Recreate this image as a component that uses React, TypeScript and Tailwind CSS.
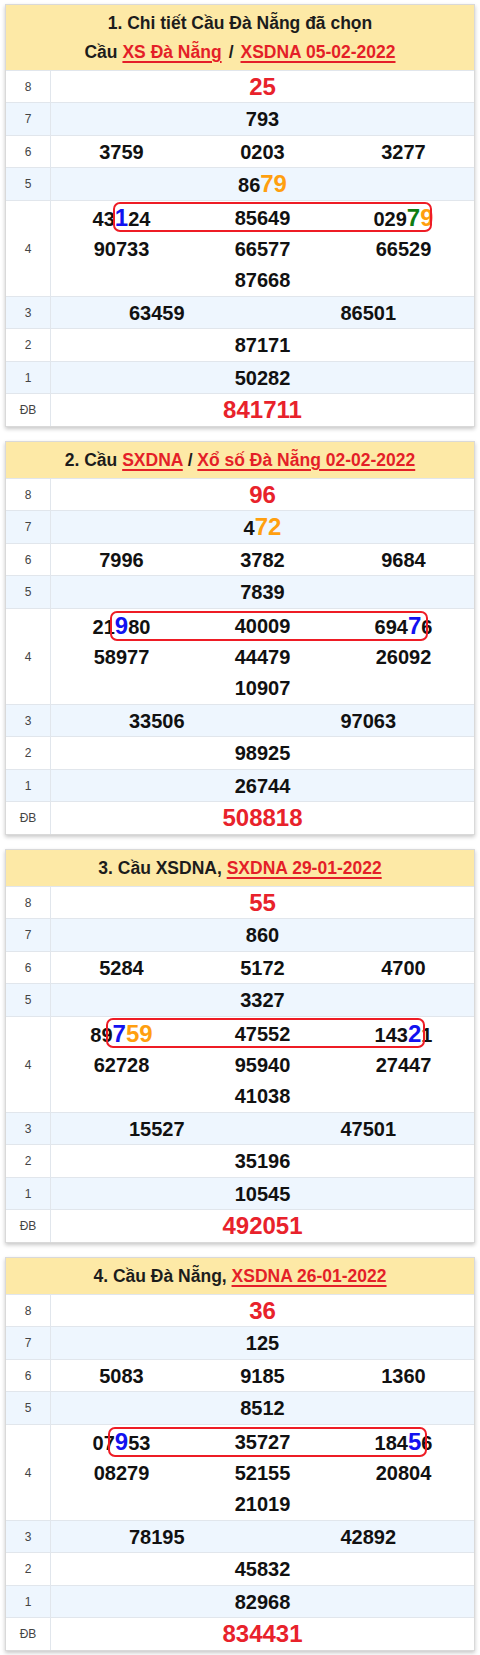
import React from "react";

type Seg = { t: string; c?: "red" | "orange" | "blue" | "green" };
type Item = Seg[];

const s = (t: string, c?: Seg["c"]): Seg => ({ t, c });
const n = (t: string): Item => [s(t)];

const colorCls: Record<string, string> = {
  red: "text-[#e8222b] text-[24px]",
  orange: "text-[#ff9f0f] text-[24px]",
  blue: "text-[#1212f0] text-[24px]",
  green: "text-[#0e7d12] text-[24px]",
};

function Num({ item }: { item: Item }) {
  return (
    <span className="whitespace-nowrap">
      {item.map((seg, i) => (
        <span key={i} className={seg.c ? colorCls[seg.c] : ""}>
          {seg.t}
        </span>
      ))}
    </span>
  );
}

type CardData = {
  header: React.ReactNode;
  twoLine?: boolean;
  g8: string;
  g7: Item;
  g6: Item[];
  g5: Item;
  g4: Item[];
  g3: Item[];
  g2: string;
  g1: string;
  db: string;
  box: { left: number; width: number; top: number };
};

const A = ({ children }: { children: React.ReactNode }) => (
  <span className="text-[#e41f28] underline decoration-[1.5px] underline-offset-[3px]">{children}</span>
);

const cards: CardData[] = [
  {
    header: (
      <div className="py-[4px] leading-[29px]">
        <div>1. Chi tiết Cầu Đà Nẵng đã chọn</div>
        <div>
          Cầu <A>XS Đà Nẵng</A>
          <span className="mx-[7px]">/</span>
          <A>XSDNA 05-02-2022</A>
        </div>
      </div>
    ),
    twoLine: true,
    g8: "25",
    g7: n("793"),
    g6: [n("3759"), n("0203"), n("3277")],
    g5: [s("86"), s("79", "orange")],
    g4: [
      [s("43"), s("1", "blue"), s("24")],
      n("85649"),
      [s("029"), s("7", "green"), s("9", "orange")],
      n("90733"),
      n("66577"),
      n("66529"),
      n("87668"),
    ],
    g3: [n("63459"), n("86501")],
    g2: "87171",
    g1: "50282",
    db: "841711",
    box: { left: 62, width: 319, top: 1 },
  },
  {
    header: (
      <div>
        2. Cầu <A>SXDNA</A> / <A>Xổ số Đà Nẵng 02-02-2022</A>
      </div>
    ),
    g8: "96",
    g7: [s("4"), s("72", "orange")],
    g6: [n("7996"), n("3782"), n("9684")],
    g5: n("7839"),
    g4: [
      [s("21"), s("9", "blue"), s("80")],
      n("40009"),
      [s("694"), s("7", "blue"), s("6")],
      n("58977"),
      n("44479"),
      n("26092"),
      n("10907"),
    ],
    g3: [n("33506"), n("97063")],
    g2: "98925",
    g1: "26744",
    db: "508818",
    box: { left: 59, width: 318, top: 2 },
  },
  {
    header: (
      <div>
        3. Cầu XSDNA, <A>SXDNA 29-01-2022</A>
      </div>
    ),
    g8: "55",
    g7: n("860"),
    g6: [n("5284"), n("5172"), n("4700")],
    g5: n("3327"),
    g4: [
      [s("89"), s("7", "blue"), s("59", "orange")],
      n("47552"),
      [s("143"), s("2", "blue"), s("1")],
      n("62728"),
      n("95940"),
      n("27447"),
      n("41038"),
    ],
    g3: [n("15527"), n("47501")],
    g2: "35196",
    g1: "10545",
    db: "492051",
    box: { left: 55, width: 319, top: 1 },
  },
  {
    header: (
      <div>
        4. Cầu Đà Nẵng, <A>XSDNA 26-01-2022</A>
      </div>
    ),
    g8: "36",
    g7: n("125"),
    g6: [n("5083"), n("9185"), n("1360")],
    g5: n("8512"),
    g4: [
      [s("07"), s("9", "blue"), s("53")],
      n("35727"),
      [s("184"), s("5", "blue"), s("6")],
      n("08279"),
      n("52155"),
      n("20804"),
      n("21019"),
    ],
    g3: [n("78195"), n("42892")],
    g2: "45832",
    g1: "82968",
    db: "834431",
    box: { left: 57, width: 319, top: 2 },
  },
];

function Row({
  label,
  alt,
  h,
  children,
  last,
}: {
  label: string;
  alt?: boolean;
  h: string;
  children: React.ReactNode;
  last?: boolean;
}) {
  return (
    <div className={`flex ${h} ${alt ? "bg-[#eef6fe]" : "bg-white"} ${last ? "" : "border-b border-[#e1e6ec]"}`}>
      <div className="w-[45px] shrink-0 border-r border-[#e1e6ec] flex items-center justify-center text-[12px] text-[#444] font-normal">
        {label}
      </div>
      <div className="relative flex-1 min-w-0">{children}</div>
    </div>
  );
}

function Card({ d }: { d: CardData }) {
  return (
    <div className="border border-[#d9d9d9] bg-white shadow-[0_2px_4px_rgba(0,0,0,0.22)]">
      <div
        className={`bg-[#fde9a6] text-center font-bold text-[17.5px] text-[#1c1c1c] border-b border-[#e1e6ec] ${
          d.twoLine ? "h-[66px]" : "h-[37px] flex items-center justify-center"
        }`}
      >
        {d.header}
      </div>
      <div className="font-bold text-[20px] text-[#111]">
        <Row label="8" h="h-[32px]">
          <div className="h-full flex items-center justify-center text-[#e8222b] text-[24px]">{d.g8}</div>
        </Row>
        <Row label="7" alt h="h-[33px]">
          <div className="h-full flex items-center justify-center">
            <Num item={d.g7} />
          </div>
        </Row>
        <Row label="6" h="h-[32px]">
          <div className="h-full grid grid-cols-3 items-center">
            {d.g6.map((it, i) => (
              <div key={i} className="text-center">
                <Num item={it} />
              </div>
            ))}
          </div>
        </Row>
        <Row label="5" alt h="h-[33px]">
          <div className="h-full flex items-center justify-center">
            <Num item={d.g5} />
          </div>
        </Row>
        <Row label="4" h="h-[96px]">
          <div className="grid grid-cols-3 auto-rows-[31px] items-center pt-[1px]">
            {d.g4.map((it, i) => (
              <div key={i} className={`text-center ${i === 6 ? "col-start-2" : ""}`}>
                <Num item={it} />
              </div>
            ))}
          </div>
          <div
            className="absolute h-[30px] border-2 border-[#ee1c25] rounded-[7px]"
            style={{ left: d.box.left, width: d.box.width, top: d.box.top }}
          />
        </Row>
        <Row label="3" alt h="h-[32px]">
          <div className="h-full grid grid-cols-2 items-center">
            {d.g3.map((it, i) => (
              <div key={i} className="text-center">
                <Num item={it} />
              </div>
            ))}
          </div>
        </Row>
        <Row label="2" h="h-[33px]">
          <div className="h-full flex items-center justify-center">{d.g2}</div>
        </Row>
        <Row label="1" alt h="h-[32px]">
          <div className="h-full flex items-center justify-center">{d.g1}</div>
        </Row>
        <Row label="ĐB" h="h-[32px]" last>
          <div className="h-full flex items-center justify-center text-[#e8222b] text-[24px]">{d.db}</div>
        </Row>
      </div>
    </div>
  );
}

export default function App() {
  return (
    <div
      className="w-[480px] min-h-[1655px] bg-white px-[5px] pt-[4px] flex flex-col gap-[14px]"
      style={{ fontFamily: '"Liberation Sans", Arial, sans-serif' }}
    >
      {cards.map((d, i) => (
        <Card key={i} d={d} />
      ))}
    </div>
  );
}
